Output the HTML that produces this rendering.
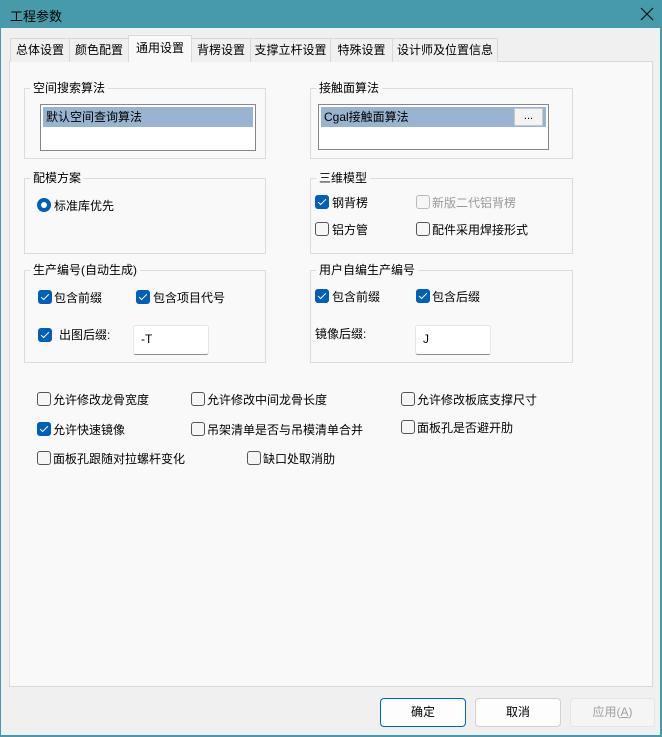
<!DOCTYPE html>
<html><head><meta charset="utf-8"><style>
*{margin:0;padding:0;box-sizing:border-box}
body{width:662px;height:737px;background:#479aa9;font-family:"Liberation Sans","Noto Sans CJK SC",sans-serif;font-size:12px;color:#000;position:relative;overflow:hidden}
.win{position:absolute;left:1px;top:28px;width:659px;height:707px;background:#f0f0f0}
.a{position:absolute;white-space:nowrap}
.title{left:10px;top:6px;font-size:13px}
.tab{position:absolute;top:38px;height:24px;background:#f0f0f0;border:1px solid #d9d9d9;border-bottom:none;text-align:center;line-height:23px;font-size:12px}
.tab.sel{top:35px;height:27px;background:#f9f9f9;z-index:2;line-height:25px}
.panel{position:absolute;left:9px;top:61px;width:644px;height:626px;background:#f9f9f9;border:1px solid #d9d9d9}
.grp{position:absolute;border:1px solid #dcdcdc}
.gl{position:absolute;background:#f9f9f9;padding:0 3px;top:-9px;left:5px;font-size:12px;line-height:16px}
.lb{position:absolute;background:#fff;border:1px solid #828790}
.sr{position:absolute;left:2px;right:2px;top:2px;height:20px;background:#99b4d1;padding-left:3px;line-height:21px;font-size:12px}
.cb{position:absolute;width:14px;height:14px;border:1px solid #555;border-radius:3px;background:#f6f6f6}
.cb.on{background:#005fb8;border-color:#005fb8}
.cb.on:after{content:"";position:absolute;left:4px;top:1px;width:3px;height:7px;border:solid #fff;border-width:0 1.5px 1.5px 0;transform:rotate(45deg)}
.cb.dis{border-color:#bbb}
.t{position:absolute;font-size:12px;white-space:nowrap;line-height:16px}
.tb{position:absolute;background:#fff;border:1px solid #e5e5e5;border-bottom:1px solid #8a8a8a;border-radius:3px;padding-left:7px;line-height:27px;font-size:12px}
.btn{position:absolute;top:698px;height:29px;width:86px;border:1px solid #d0d0d0;border-radius:4px;background:#fdfdfd;text-align:center;line-height:27px;font-size:12px}
</style></head><body>
<div class="a title">工程参数</div>
<svg class="a" style="left:640px;top:7px" width="14" height="14"><path d="M1 1L13 13M13 1L1 13" stroke="#111" stroke-width="1.2"/></svg>
<div class="win"></div>
<div class="panel"></div>
<div class="tab" style="left:10px;width:60px">总体设置</div>
<div class="tab" style="left:69px;width:60px">颜色配置</div>
<div class="tab sel" style="left:128px;width:64px">通用设置</div>
<div class="tab" style="left:191px;width:60px">背楞设置</div>
<div class="tab" style="left:250px;width:81px">支撑立杆设置</div>
<div class="tab" style="left:330px;width:63px">特殊设置</div>
<div class="tab" style="left:392px;width:106px">设计师及位置信息</div>

<div class="grp" style="left:24px;top:88px;width:242px;height:71px"><div class="gl">空间搜索算法</div></div>
<div class="lb" style="left:40px;top:104px;width:216px;height:47px"><div class="sr">默认空间查询算法</div></div>

<div class="grp" style="left:310px;top:88px;width:263px;height:71px"><div class="gl">接触面算法</div></div>
<div class="lb" style="left:318px;top:104px;width:231px;height:46px"><div class="sr">Cgal接触面算法</div>
<div style="position:absolute;left:195px;top:3px;width:29px;height:18px;background:#f3f3f3;border:1px solid #c8c8c8;text-align:center;line-height:14px;font-size:11px">...</div></div>

<div class="grp" style="left:24px;top:178px;width:242px;height:76px"><div class="gl">配模方案</div></div>
<div class="a" style="left:37px;top:198px;width:14px;height:14px;border-radius:50%;background:#005fb8"><div style="position:absolute;left:4px;top:4px;width:6px;height:6px;border-radius:50%;background:#fff"></div></div>
<div class="t" style="left:54px;top:198px">标准库优先</div>

<div class="grp" style="left:310px;top:178px;width:263px;height:76px"><div class="gl">三维模型</div></div>
<div class="cb on" style="left:315px;top:195px"></div><div class="t" style="left:332px;top:195px">钢背楞</div>
<div class="cb dis" style="left:416px;top:195px"></div><div class="t" style="left:432px;top:195px;color:#999">新版二代铝背楞</div>
<div class="cb" style="left:315px;top:222px"></div><div class="t" style="left:332px;top:222px">铝方管</div>
<div class="cb" style="left:416px;top:222px"></div><div class="t" style="left:432px;top:222px">配件采用焊接形式</div>

<div class="grp" style="left:24px;top:270px;width:242px;height:93px"><div class="gl">生产编号(自动生成)</div></div>
<div class="cb on" style="left:38px;top:290px"></div><div class="t" style="left:54px;top:290px">包含前缀</div>
<div class="cb on" style="left:136px;top:290px"></div><div class="t" style="left:153px;top:290px">包含项目代号</div>
<div class="cb on" style="left:38px;top:328px"></div><div class="t" style="left:59px;top:327px">出图后缀:</div>
<div class="tb" style="left:133px;top:325px;width:76px;height:30px">-T</div>

<div class="grp" style="left:310px;top:270px;width:263px;height:93px"><div class="gl">用户自编生产编号</div></div>
<div class="cb on" style="left:315px;top:289px"></div><div class="t" style="left:332px;top:289px">包含前缀</div>
<div class="cb on" style="left:416px;top:289px"></div><div class="t" style="left:432px;top:289px">包含后缀</div>
<div class="t" style="left:315px;top:326px">镜像后缀:</div>
<div class="tb" style="left:415px;top:325px;width:76px;height:30px">J</div>

<div class="cb" style="left:37px;top:392px"></div><div class="t" style="left:53px;top:392px">允许修改龙骨宽度</div>
<div class="cb" style="left:191px;top:392px"></div><div class="t" style="left:207px;top:392px">允许修改中间龙骨长度</div>
<div class="cb" style="left:401px;top:392px"></div><div class="t" style="left:417px;top:392px">允许修改板底支撑尺寸</div>
<div class="cb on" style="left:37px;top:422px"></div><div class="t" style="left:53px;top:422px">允许快速镜像</div>
<div class="cb" style="left:191px;top:422px"></div><div class="t" style="left:207px;top:422px">吊架清单是否与吊模清单合并</div>
<div class="cb" style="left:401px;top:420px"></div><div class="t" style="left:417px;top:420px">面板孔是否避开肋</div>
<div class="cb" style="left:37px;top:451px"></div><div class="t" style="left:53px;top:451px">面板孔跟随对拉螺杆变化</div>
<div class="cb" style="left:247px;top:451px"></div><div class="t" style="left:263px;top:451px">缺口处取消肋</div>

<div class="btn" style="left:380px;border:1px solid #0067c0">确定</div>
<div class="btn" style="left:475px">取消</div>
<div class="btn" style="left:570px;width:85px;background:#f5f5f5;border-color:#e5e5e5;color:#a0a0a0">应用(<u>A</u>)</div>
</body></html>
